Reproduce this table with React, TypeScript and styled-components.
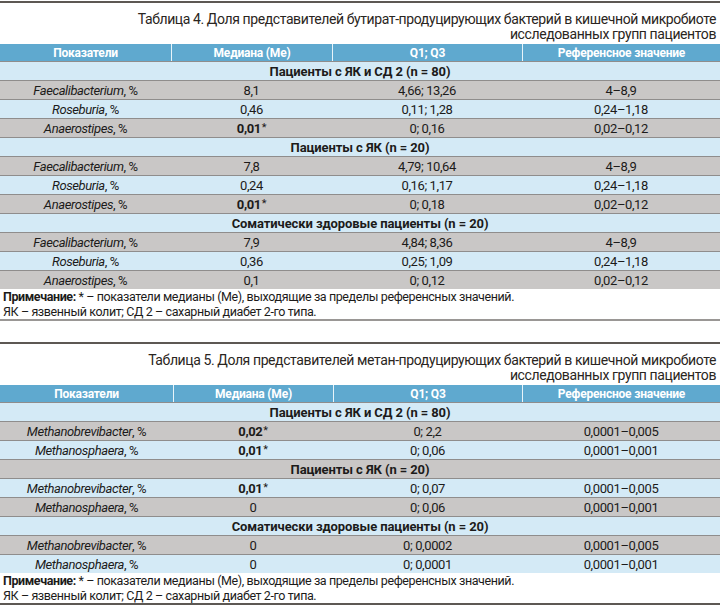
import React from "react";
import styled, { createGlobalStyle } from "styled-components";

const GlobalStyle = createGlobalStyle`
  html, body { margin: 0; padding: 0; background: #ffffff; }
  body { width: 720px; overflow: hidden; }
`;

const FONT = `Roboto, "Liberation Sans", "DejaVu Sans Condensed", sans-serif`;

type Tone = "light" | "grey";

const Page = styled.div`
  display: flex;
  flex-direction: column;
  padding-top: 1px;
  font-family: ${FONT};
  color: #1c1b1a;
`;

const Block = styled.section<{ $gap: number }>`
  display: flex;
  flex-direction: column;
  border-top: 2px solid #5d5853;
  border-bottom: 2px solid ${(p) => (p.$gap > 0 ? "#9a9795" : "#5d5853")};
  margin-bottom: ${(p) => p.$gap}px;
`;

const Title = styled.h2`
  margin: 0;
  padding: 9px 4px 0 0;
  height: 40px;
  box-sizing: border-box;
  text-align: right;
  font-family: ${FONT};
  font-weight: 400;
  font-size: 14px;
  line-height: 15px;
  letter-spacing: -0.4px;
  color: #2a2521;
`;

const TitleLine = styled.div`
  white-space: nowrap;
`;

const Header = styled.div<{ $cols: string }>`
  display: grid;
  grid-template-columns: ${(p) => p.$cols};
  height: 17px;
  background: #5fa9cf;
  margin-top: 1px;
`;

const HeadCell = styled.div`
  display: flex;
  align-items: center;
  justify-content: center;
  color: #ffffff;
  font-weight: 700;
  font-size: 12px;
  letter-spacing: -0.2px;
  & + & { border-left: 1px solid #e8f4fa; }
`;

const Row = styled.div<{ $cols: string; $tone: Tone; $h: number }>`
  display: grid;
  grid-template-columns: ${(p) => p.$cols};
  height: ${(p) => p.$h}px;
  border-top: 1px solid #8f8d8c;
  background: ${(p) => (p.$tone === "light" ? "#d4eaf6" : "#c9c7c6")};
  align-items: center;
`;

const GroupRow = styled.div<{ $tone: Tone; $h: number }>`
  display: flex;
  align-items: center;
  justify-content: center;
  height: ${(p) => p.$h}px;
  border-top: 1px solid #8f8d8c;
  background: ${(p) => (p.$tone === "light" ? "#d4eaf6" : "#c9c7c6")};
  font-weight: 700;
  font-size: 13px;
  letter-spacing: -0.1px;
`;

const Cell = styled.div`
  text-align: center;
  font-size: 13px;
  letter-spacing: -0.4px;
  white-space: nowrap;
`;

const Latin = styled.i`
  font-style: italic;
`;

const Strong = styled.b`
  font-weight: 700;
`;

const Star = styled.span`
  font-weight: 400;
  font-size: 11px;
  position: relative;
  top: -2px;
  margin-left: 1px;
`;

const Note = styled.div`
  padding: 0 0 0 3px;
  font-size: 12.5px;
  line-height: 15px;
  letter-spacing: -0.4px;
`;

type DataRow = [string, string, boolean, string, string];
type Group = { name: string; rows: DataRow[] };
type TableData = {
  title: [string, string];
  cols: string;
  rowH: number;
  groups: Group[];
};

const tables: TableData[] = [
  {
    title: [
      "Таблица 4. Доля представителей бутират-продуцирующих бактерий в кишечной микробиоте",
      "исследованных групп пациентов",
    ],
    cols: "171px 161px 190px 198px",
    rowH: 18,
    groups: [
      {
        name: "Пациенты с ЯК и СД 2 (n = 80)",
        rows: [
          ["Faecalibacterium", "8,1", false, "4,66; 13,26", "4–8,9"],
          ["Roseburia", "0,46", false, "0,11; 1,28", "0,24–1,18"],
          ["Anaerostipes", "0,01", true, "0; 0,16", "0,02–0,12"],
        ],
      },
      {
        name: "Пациенты с ЯК (n = 20)",
        rows: [
          ["Faecalibacterium", "7,8", false, "4,79; 10,64", "4–8,9"],
          ["Roseburia", "0,24", false, "0,16; 1,17", "0,24–1,18"],
          ["Anaerostipes", "0,01", true, "0; 0,18", "0,02–0,12"],
        ],
      },
      {
        name: "Соматически здоровые пациенты (n = 20)",
        rows: [
          ["Faecalibacterium", "7,9", false, "4,84; 8,36", "4–8,9"],
          ["Roseburia", "0,36", false, "0,25; 1,09", "0,24–1,18"],
          ["Anaerostipes", "0,1", false, "0; 0,12", "0,02–0,12"],
        ],
      },
    ],
  },
  {
    title: [
      "Таблица 5. Доля представителей метан-продуцирующих бактерий в кишечной микробиоте",
      "исследованных групп пациентов",
    ],
    cols: "173px 160px 189px 198px",
    rowH: 18,
    groups: [
      {
        name: "Пациенты с ЯК и СД 2 (n = 80)",
        rows: [
          ["Methanobrevibacter", "0,02", true, "0; 2,2", "0,0001–0,005"],
          ["Methanosphaera", "0,01", true, "0; 0,06", "0,0001–0,001"],
        ],
      },
      {
        name: "Пациенты с ЯК (n = 20)",
        rows: [
          ["Methanobrevibacter", "0,01", true, "0; 0,07", "0,0001–0,005"],
          ["Methanosphaera", "0", false, "0; 0,06", "0,0001–0,001"],
        ],
      },
      {
        name: "Соматически здоровые пациенты (n = 20)",
        rows: [
          ["Methanobrevibacter", "0", false, "0; 0,0002", "0,0001–0,005"],
          ["Methanosphaera", "0", false, "0; 0,0001", "0,0001–0,001"],
        ],
      },
    ],
  },
];

const headers = ["Показатели", "Медиана (Ме)", "Q1; Q3", "Референсное значение"];

function DataTable({ data, gap }: { data: TableData; gap: number }) {
  let idx = 0;
  const tone = (): Tone => (idx++ % 2 === 0 ? "light" : "grey");
  return (
    <Block $gap={gap}>
      <Title>
        <TitleLine>{data.title[0]}</TitleLine>
        <TitleLine>{data.title[1]}</TitleLine>
      </Title>
      <Header $cols={data.cols}>
        {headers.map((h) => (
          <HeadCell key={h}>{h}</HeadCell>
        ))}
      </Header>
      {data.groups.map((g) => (
        <React.Fragment key={g.name}>
          <GroupRow $tone={tone()} $h={data.rowH}>
            {g.name}
          </GroupRow>
          {g.rows.map((r) => (
            <Row key={g.name + r[0]} $cols={data.cols} $tone={tone()} $h={data.rowH}>
              <Cell>
                <Latin>{r[0]}</Latin>, %
              </Cell>
              <Cell>
                {r[2] ? (
                  <>
                    <Strong>{r[1]}</Strong>
                    <Star>*</Star>
                  </>
                ) : (
                  r[1]
                )}
              </Cell>
              <Cell>{r[3]}</Cell>
              <Cell>{r[4]}</Cell>
            </Row>
          ))}
        </React.Fragment>
      ))}
      <Note>
        <div>
          <Strong>Примечание:</Strong> * – показатели медианы (Ме), выходящие за пределы референсных значений.
        </div>
        <div>ЯК – язвенный колит; СД 2 – сахарный диабет 2-го типа.</div>
      </Note>
    </Block>
  );
}

export default function App() {
  return (
    <>
      <GlobalStyle />
      <Page>
        <DataTable data={tables[0]} gap={21} />
        <DataTable data={tables[1]} gap={0} />
      </Page>
    </>
  );
}
